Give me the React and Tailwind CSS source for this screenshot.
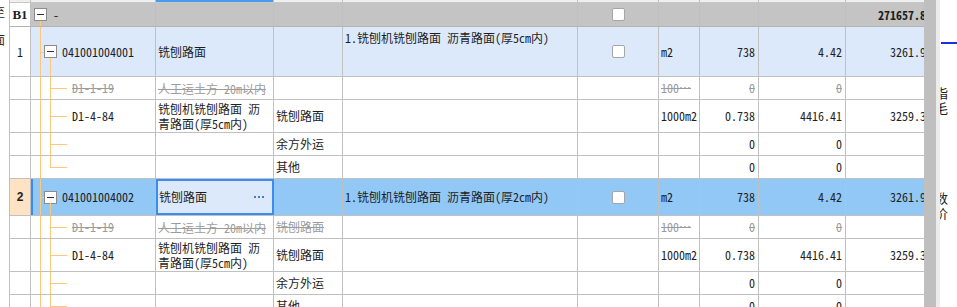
import React from "react";

const W = {
  num: "w-[21px]",
  tree: "w-[125px]",
  name: "w-[118px]",
  c3: "w-[69px]",
  desc: "w-[235px]",
  chk: "w-[81px]",
  unit: "w-[41px]",
  qty: "w-[59px]",
  price: "w-[87px]",
  total: "w-[90px]",
};

const LINE = "bg-[#fdc978]";

const Cell = ({ w, className = "", children }) => (
  <div className={`${w} shrink-0 h-full border-r border-[#c0c0c0] flex items-center overflow-hidden whitespace-nowrap ${className}`}>
    {children}
  </div>
);

const Box = () => (
  <div className="w-[13px] h-[13px] shrink-0 border border-[#8c8c8c] bg-white flex items-center justify-center">
    <div className="w-[7px] h-px bg-[#333]" />
  </div>
);

const Check = () => <div className="w-[13px] h-[13px] border border-[#a6a6a6] rounded-[2px] bg-white" />;

const Del = ({ children }) => <span className="line-through text-[#9c9c9c]">{children}</span>;

const TreeItem = ({ code }) => (
  <div className="relative w-full h-full flex items-center pl-[13px]">
    <div className={`absolute left-[9px] top-0 bottom-0 w-px ${LINE}`} />
    <div className={`absolute left-[9px] top-1/2 w-[4px] h-px ${LINE}`} />
    <div className={`absolute left-[19px] top-[calc(50%+6px)] bottom-0 w-px ${LINE}`} />
    <Box />
    <span className="ml-[5px]">{code}</span>
  </div>
);

const TreeChild = ({ code, last, del }) => (
  <div className="relative w-full h-full flex items-center pl-[41px]">
    <div className={`absolute left-[9px] top-0 bottom-0 w-px ${LINE}`} />
    <div className={`absolute left-[19px] top-0 w-px ${LINE} ${last ? "h-1/2" : "bottom-0"}`} />
    <div className={`absolute left-[19px] top-1/2 w-[17px] h-px ${LINE}`} />
    {del ? <Del>{code}</Del> : code}
  </div>
);

const ChildRows = ({ c3del }) => {
  const rows = [
    { code: "D1-1-19", name: "人工运土方 20m以内", c3: c3del ? "铣刨路面" : "", unit: "100…", qty: "0", price: "0", total: "0", del: true, h: "h-[23px]" },
    { code: "D1-4-84", name: <>铣刨机铣刨路面 沥<br />青路面(厚5cm内)</>, c3: "铣刨路面", unit: "1000m2", qty: "0.738", price: "4416.41", total: "3259.39", h: "h-[33px]" },
    { code: "", name: "", c3: "余方外运", unit: "", qty: "0", price: "0", total: "0", h: "h-[23px]" },
    { code: "", name: "", c3: "其他", unit: "", qty: "0", price: "0", total: "0", h: "h-[23px]", last: true },
  ];
  return rows.map((r, i) => {
    const t = (v) => (r.del ? <Del>{v}</Del> : v);
    return (
      <div key={i} className={`flex shrink-0 border-b border-[#c0c0c0] bg-white ${r.h}`}>
        <Cell w={W.num} />
        <Cell w={W.tree}>
          <TreeChild code={r.code} last={r.last} del={r.del} />
        </Cell>
        <Cell w={W.name} className="pl-[2px] leading-[15px]">{t(r.name)}</Cell>
        <Cell w={W.c3} className="pl-[2px]">{t(r.c3)}</Cell>
        <Cell w={W.desc} />
        <Cell w={W.chk} />
        <Cell w={W.unit} className="pl-[2px]">{t(r.unit)}</Cell>
        <Cell w={W.qty} className="justify-end pr-[3px]">{t(r.qty)}</Cell>
        <Cell w={W.price} className="justify-end pr-[3px]">{t(r.price)}</Cell>
        <Cell w={W.total} className="justify-end pr-[3px]">{t(r.total)}</Cell>
      </div>
    );
  });
};

export default function App() {
  return (
    <div className="w-[957px] h-[307px] overflow-hidden bg-white flex text-[12px] leading-[14px] text-[#1e1e1e] font-['Noto_Sans_Mono_CJK_SC','Noto_Sans_CJK_SC',monospace]">
      {/* left edge of neighbouring panel */}
      <div className="w-[10px] shrink-0 overflow-hidden border-r border-[#c0c0c0] flex flex-col pt-[6px] gap-[2px]">
        <span className="ml-[-7px] leading-[12px]">至</span>
        <span className="ml-[-7px] leading-[12px]">：</span>
        <span className="ml-[-7px] leading-[12px]">面</span>
      </div>

      {/* grid */}
      <div className="w-[914px] shrink-0 h-full overflow-hidden flex flex-col">
        <div className="flex shrink-0 h-[3px] border-b border-[#c8c8c8] bg-[#efefef]">
          <Cell w={W.num} />
          <Cell w={W.tree} />
          <Cell w={W.name} className="items-start">
            <div className="w-full h-[2px] bg-[#4a9af0]" />
          </Cell>
          <Cell w={W.c3} />
          <Cell w={W.desc} />
          <Cell w={W.chk} />
          <Cell w={W.unit} />
          <Cell w={W.qty} />
          <Cell w={W.price} />
          <Cell w={W.total} />
        </div>

        {/* B1 */}
        <div className="flex shrink-0 h-[24px] border-b border-[#b4b4b4] bg-[#c4c4c4]">
          <Cell w={W.num} className="bg-white justify-center font-bold font-['Liberation_Serif',serif] text-[13px]">B1</Cell>
          <Cell w={W.tree}>
            <div className="relative w-full h-full flex items-center pl-[3px]">
              <div className={`absolute left-[9px] top-[18px] bottom-0 w-px ${LINE}`} />
              <Box />
              <span className="ml-[6px]">-</span>
            </div>
          </Cell>
          <Cell w={W.name} />
          <Cell w={W.c3} />
          <Cell w={W.desc} />
          <Cell w={W.chk} className="justify-center"><Check /></Cell>
          <Cell w={W.unit} />
          <Cell w={W.qty} />
          <Cell w={W.price} />
          <Cell w={W.total} className="justify-end pr-[3px] font-bold">271657.86</Cell>
        </div>

        {/* item 1 */}
        <div className="flex shrink-0 h-[50px] border-b border-[#c0c0c0] bg-[#dce9fb]">
          <Cell w={W.num} className="bg-white justify-center">1</Cell>
          <Cell w={W.tree}><TreeItem code="041001004001" /></Cell>
          <Cell w={W.name} className="pl-[2px]">铣刨路面</Cell>
          <Cell w={W.c3} />
          <Cell w={W.desc} className="items-start pl-[2px] pt-[4px]">1.铣刨机铣刨路面 沥青路面(厚5cm内)</Cell>
          <Cell w={W.chk} className="justify-center"><Check /></Cell>
          <Cell w={W.unit} className="pl-[2px]">m2</Cell>
          <Cell w={W.qty} className="justify-end pr-[3px]">738</Cell>
          <Cell w={W.price} className="justify-end pr-[3px]">4.42</Cell>
          <Cell w={W.total} className="justify-end pr-[3px]">3261.96</Cell>
        </div>
        <ChildRows />

        {/* item 2 (selected) */}
        <div className="flex shrink-0 h-[37px] border-b border-[#c0c0c0] bg-[#92c8f5]">
          <Cell w={W.num} className="bg-[#fde3c3] justify-center font-bold font-['Liberation_Sans',sans-serif]">2</Cell>
          <Cell w={W.tree} className="relative">
            <div className="absolute left-0 top-0 bottom-0 w-[2px] bg-[#3b8de8]" />
            <TreeItem code="041001004002" />
          </Cell>
          <div className="w-[118px] shrink-0 h-full border-2 border-[#3c8cf0] bg-[#dce9fb] flex items-center pl-[1px] whitespace-nowrap">
            铣刨路面
            <div className="ml-auto mr-[8px] flex gap-[2px]">
              <div className="w-[2px] h-[2px] bg-[#3a7fd0]" />
              <div className="w-[2px] h-[2px] bg-[#3a7fd0]" />
              <div className="w-[2px] h-[2px] bg-[#3a7fd0]" />
            </div>
          </div>
          <Cell w={W.c3} />
          <Cell w={W.desc} className="pl-[2px]">1.铣刨机铣刨路面 沥青路面(厚2cm内)</Cell>
          <Cell w={W.chk} className="justify-center"><Check /></Cell>
          <Cell w={W.unit} className="pl-[2px]">m2</Cell>
          <Cell w={W.qty} className="justify-end pr-[3px]">738</Cell>
          <Cell w={W.price} className="justify-end pr-[3px]">4.42</Cell>
          <Cell w={W.total} className="justify-end pr-[3px]">3261.96</Cell>
        </div>
        <ChildRows c3del />
      </div>

      {/* scrollbar */}
      <div className="w-[12px] shrink-0 h-full bg-[#bfbfbf]" />
      <div className="w-[4px] shrink-0 h-full bg-[#ececec]" />

      {/* right panel edge */}
      <div className="flex-1 h-full overflow-hidden flex flex-col text-[13px]">
        <div className="mt-[42px] ml-px h-[2px] bg-[#1a2fe0]" />
        <span className="mt-[41px] ml-[-5px] leading-[15px]">指毛</span>
        <span className="mt-[75px] ml-[-5px] leading-[15px]">数价</span>
      </div>
    </div>
  );
}
